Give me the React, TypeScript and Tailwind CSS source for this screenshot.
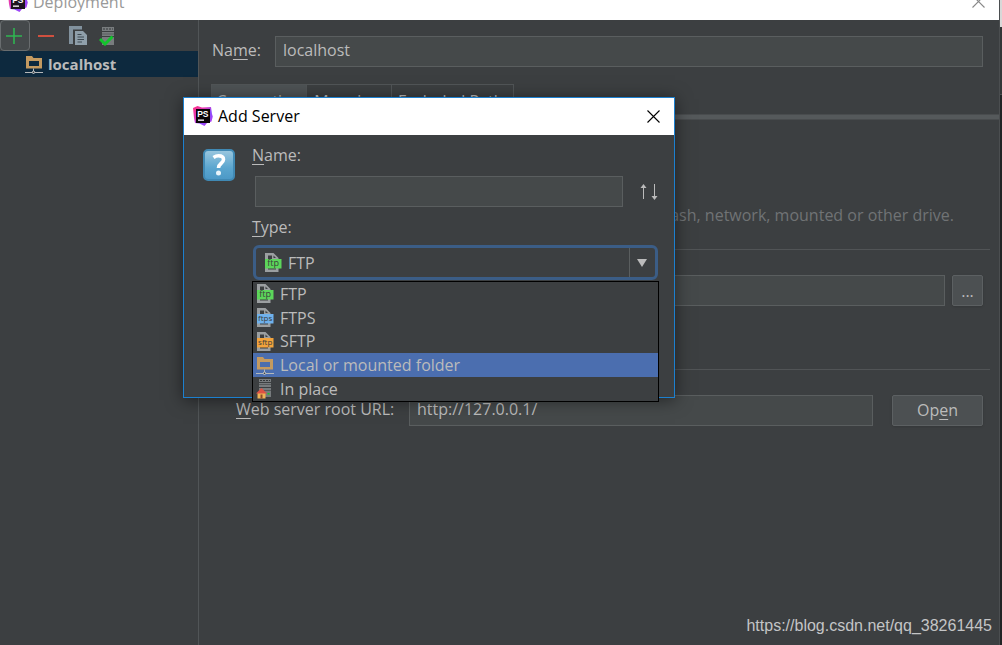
import type { ReactNode } from "react";

function PhpStormIcon({ id, faded = false }: { id: string; faded?: boolean }) {
  return (
    <svg width="20" height="20" viewBox="0 0 20 20" className="shrink-0" aria-hidden="true">
      <defs>
        <linearGradient id={id} x1="0" y1="0" x2="1" y2="1">
          <stop offset="0" stopColor="#ff2d80" />
          <stop offset="0.35" stopColor="#e03cb8" />
          <stop offset="0.6" stopColor="#8a4bff" />
          <stop offset="1" stopColor="#c13ce8" />
        </linearGradient>
      </defs>
      <path d="M0 2 4.500 0l4.500 1.500 9-.5L19 8l.8 2.500-1.300 5-4.500 1.500-2.500 3-5-2.500-4.500-.5L1 12Z" fill={`url(#${id})`} />
      <rect x="3" y="3" width="14" height="14" fill={faded ? "#1c1420" : "#0a0508"} />
      <text x="4.200" y="10.500" fontSize="8.500" fontWeight="700" fill="#fff" fontFamily="'Liberation Sans', sans-serif">
        PS
      </text>
      <rect x="5" y="13.500" width="6" height="1.300" fill="#fff" />
    </svg>
  );
}

function FolderServerIcon() {
  return (
    <svg width="18" height="19" viewBox="0 0 18 19" className="shrink-0" aria-hidden="true">
      <path fillRule="evenodd" d="M1 1h6l1.500 2H17v10.500H1ZM4 6v5h10V6Z" fill="#c49a60" />
      <path d="M0 17.500h7M10 17.500H18M8.500 13.500v3" stroke="#b4b8ba" />
      <circle cx="8.500" cy="17.300" r="1.200" fill="#3c3f41" stroke="#c8cccd" />
    </svg>
  );
}

function FileIcon({ label, color }: { label: string; color: string }) {
  return (
    <svg width="18" height="19" viewBox="0 0 18 19" className="shrink-0" aria-hidden="true">
      <path d="M1 0h8.500l5 5v14H1ZM4 2.500v14h8V6.500H8v-4Z" fillRule="evenodd" fill="#9b9fa1" />
      <path d="M9.500 2.500V5H12Z" fill="#3c3f41" />
      <rect x="1" y="6" width="16.500" height="9.500" fill={color} />
      <text
        x="9.200"
        y="13"
        textAnchor="middle"
        fontSize={label.length > 3 ? "8" : "9"}
        fill="#3a403b"
        fontFamily="'Open Sans', sans-serif"
      >
        {label}
      </text>
    </svg>
  );
}

function InPlaceIcon() {
  return (
    <svg width="18" height="20" viewBox="0 0 18 20" className="shrink-0" aria-hidden="true">
      <path d="M3 0h12v3H3ZM3 4h12v4H3ZM3 9h12v9H3Z" fill="#777b7d" />
      <path d="M4 1.500h10" stroke="#35383a" strokeDasharray="2 1" />
      <path d="M3 5.500h12M3 11.500h12" stroke="#55595b" />
      <path d="M1.500 14h8v5.500h-8Z" fill="#f0b354" />
      <path d="M0 14.500 5.500 9 11 14.500Z" fill="#dd5145" />
      <path d="M4.500 15.500h2v4h-2Z" fill="#8c4a2c" />
      <rect x="11.500" y="14" width="2" height="1.500" fill="#16c52b" />
    </svg>
  );
}

function CopyIcon() {
  return (
    <svg width="20" height="20" viewBox="0 0 20 20" aria-hidden="true">
      <path d="M1 0h13v3.500H5V18H1Z" fill="#82929e" />
      <path d="M7 5h8l4 4v10H7Z" fill="#8f9faa" />
      <path d="M9.500 8.500h4M9.500 11h6.500M9.500 13.500h6.500M9.500 16h4.500" stroke="#3f4a52" />
    </svg>
  );
}

function ValidateIcon() {
  return (
    <svg width="18" height="20" viewBox="0 0 18 20" aria-hidden="true">
      <path d="M3 1h12v4H3ZM3 6h12v4H3ZM3 11h12v8H3Z" fill="#787c7e" />
      <path d="M4 3h10" stroke="#35383a" strokeDasharray="2 1" />
      <path d="M3 8h12" stroke="#5b5f61" />
      <path d="M1 13l5 5 7.500-7.500" fill="none" stroke="#12c42c" strokeWidth="3" />
    </svg>
  );
}

function CloseIcon({ color }: { color: string }) {
  return (
    <svg width="13" height="13" viewBox="0 0 13 13" aria-hidden="true">
      <path d="M.5.5l12 12M12.500.5l-12 12" stroke={color} strokeWidth="1.100" fill="none" />
    </svg>
  );
}

const key = "underline decoration-1 underline-offset-3";
const field = "h-[31px] min-w-0 border border-[#5a5e5f] bg-[#45494a] px-[7px] pb-[3px] text-[#bbbbbb] outline-none";
const tool = "flex h-[31px] items-center justify-center";

const serverTypes: { name: string; icon: ReactNode; active?: boolean }[] = [
  { name: "FTP", icon: <FileIcon label="ftp" color="#5cd65a" /> },
  { name: "FTPS", icon: <FileIcon label="ftps" color="#6fb1ec" /> },
  { name: "SFTP", icon: <FileIcon label="sftp" color="#f2a33c" /> },
  { name: "Local or mounted folder", icon: <FolderServerIcon />, active: true },
  { name: "In place", icon: <InPlaceIcon /> },
];

function Sidebar() {
  return (
    <aside className="w-[199px] shrink-0 border-r border-[#515557]">
      <div className="flex h-[31px] items-center">
        <button type="button" aria-label="Add" className={`${tool} w-[30px] rounded-sm border border-[#696d6f] bg-[#45494b] pr-[2px]`}>
          <svg width="16" height="16" viewBox="0 0 16 16" aria-hidden="true">
            <path d="M8 0v16M0 8h16" stroke="#2fb552" strokeWidth="1.600" />
          </svg>
        </button>
        <button type="button" aria-label="Remove" className={`${tool} w-8`}>
          <svg width="16" height="16" viewBox="0 0 16 16" aria-hidden="true">
            <path d="M0 8h16" stroke="#d0503f" strokeWidth="2" />
          </svg>
        </button>
        <button type="button" aria-label="Copy" className={`${tool} w-8`}>
          <CopyIcon />
        </button>
        <button type="button" aria-label="Validate" className={`${tool} w-[27px]`}>
          <ValidateIcon />
        </button>
      </div>
      <div className="flex h-[26px] items-center gap-[5px] bg-[#0d293e] pl-[25px] font-bold">
        <FolderServerIcon />
        <span className="text-[15px]">localhost</span>
      </div>
    </aside>
  );
}

function ServerSettings() {
  return (
    <main className="min-w-0 flex-1 pt-4">
      <div className="flex items-center pr-4 pl-[13px]">
        <label htmlFor="server-name" className="w-[63px] pb-[3px]">
          Na<span className={key}>m</span>e:
        </label>
        <input id="server-name" defaultValue="localhost" className={`${field} flex-1`} />
      </div>

      <div role="tablist" className="mt-[17px] flex h-[30px] pl-3 leading-8">
        <button type="button" role="tab" aria-selected="true" className="w-24 border border-b-0 border-[#515557] bg-[#4e5355] text-center">
          Connection
        </button>
        <button type="button" role="tab" aria-selected="false" className="w-[85px] border-t border-r border-[#515557] pr-1 text-center">
          Mapping
        </button>
        <button type="button" role="tab" aria-selected="false" className="w-[122px] border-t border-r border-[#515557] pl-1 text-center">
          Excluded Paths
        </button>
      </div>
      <div className="ml-3 h-[6px] border-y border-[#494c4e] bg-[#55595b]" />

      <p className="mt-[83px] pr-[45px] text-right leading-6 text-[#707375]">flash, network, mounted or other drive.</p>
      <hr className="mt-[22px] mr-[9px] ml-6 border-[#515456]" />

      <div className="mt-[25px] flex gap-[7px] pr-4 pl-[210px]">
        <input aria-label="Folder" className={`${field} flex-1`} />
        <button type="button" aria-label="Browse" className="h-[31px] w-[31px] rounded-xs border border-[#5c6062] bg-[#4c5052] shadow-sm">
          ...
        </button>
      </div>

      <hr className="mt-[63px] mr-[9px] ml-6 border-[#515456]" />
      <div className="mt-[25px] flex pr-4 pl-[37px]">
        <label htmlFor="root-url" className="w-[173px] pt-[2px] whitespace-nowrap">
          <span className={key}>W</span>eb server root URL:
        </label>
        <input id="root-url" defaultValue="http://127.0.0.1/" className={`${field} flex-1`} />
        <button type="button" className="ml-[19px] h-[31px] w-[91px] rounded-xs border border-[#5c6062] bg-[#4c5052] pb-px shadow-sm">
          Op<span className={key}>e</span>n
        </button>
      </div>
    </main>
  );
}

function AddServerDialog() {
  return (
    <section role="dialog" aria-labelledby="dialog-title" className="absolute top-[97px] left-[183px] w-[492px] border border-[#1c80cf] bg-[#3c3f41] shadow-[0_2px_16px_rgba(0,0,0,0.5)]">
      <header className="flex h-[37px] items-center bg-white pr-[14px] pb-px pl-[9px] text-black">
        <PhpStormIcon id="ps-dialog" />
        <h1 id="dialog-title" className="ml-[5px] flex-1">Add Server</h1>
        <button type="button" aria-label="Close">
          <CloseIcon color="#000" />
        </button>
      </header>

      <div className="flex gap-[17px] pt-2 pr-4 pb-[117px] pl-[19px]">
        <svg width="32" height="32" viewBox="0 0 32 32" className="mt-[6px] shrink-0" aria-hidden="true">
          <defs>
            <linearGradient id="question" x1="0" y1="0" x2="0" y2="1">
              <stop offset="0" stopColor="#9cc8df" />
              <stop offset="0.6" stopColor="#5ba6cf" />
              <stop offset="1" stopColor="#4b98c6" />
            </linearGradient>
          </defs>
          <rect x="1" y="1" width="30" height="30" rx="4" fill="url(#question)" stroke="#4089b4" strokeWidth="2" />
          <path d="M10.500 8.500q2.500-1.700 5-1.700 5 0 5 3.700 0 2-2.500 4-2.500 2-2.500 4.500" fill="none" stroke="#fff" strokeWidth="3.600" />
          <circle cx="15.500" cy="24" r="2.500" fill="#e9f4fa" />
        </svg>
        <div className="flex min-w-0 flex-1 flex-col">
          <label htmlFor="new-name" className="h-6 leading-6">
            <span className={key}>N</span>ame:
          </label>
          <div className="mt-[9px] flex items-center pl-[3px]">
            <input id="new-name" className={`${field} flex-1`} />
            <button type="button" aria-label="Swap order" className="ml-[17px] w-[18px]">
              <svg width="18" height="16" viewBox="0 0 18 16" aria-hidden="true">
                <path d="M3.500 15V2M14.500 0v13" stroke="#bbb" />
                <path d="M.5 4 3.500 0l3 4ZM11.500 12l3 4 3-4Z" fill="#bbb" />
              </svg>
            </button>
          </div>
          <label htmlFor="server-type" className="mt-2 h-6 leading-6">
            <span className={key}>T</span>ype:
          </label>
          <div className="relative mt-[6px] ml-px">
            <select id="server-type" defaultValue="FTP" className="h-[35px] w-full appearance-none rounded-md border-3 border-[#3b5d86] bg-[#3c3f41] pl-8 outline-none">
              {serverTypes.map((type) => (
                <option key={type.name}>{type.name}</option>
              ))}
            </select>
            <span className="pointer-events-none absolute inset-y-[3px] left-[11px] flex items-center">
              <FileIcon label="ftp" color="#5cd65a" />
            </span>
            <span className="pointer-events-none absolute inset-y-[3px] right-[3px] flex w-[26px] items-center justify-center border-l border-[#5a5e5f] pr-[2px]">
              <svg width="10" height="8" viewBox="0 0 10 8" aria-hidden="true">
                <path d="M0 0h10L5 8Z" fill="#bbb" />
              </svg>
            </span>
            <ul role="listbox" aria-label="Server types" className="absolute top-9 -right-px -left-px flex h-[121px] flex-col border border-black bg-[#3c3f41]">
              {serverTypes.map((type) => (
                <li
                  key={type.name}
                  role="option"
                  aria-selected={Boolean(type.active)}
                  className={`flex flex-1 items-center gap-[6px] pl-[3px] leading-5 ${type.active ? "bg-[#4b6eaf]" : ""}`}
                >
                  {type.icon}
                  {type.name}
                </li>
              ))}
            </ul>
          </div>
        </div>
      </div>
    </section>
  );
}

export default function App() {
  return (
    <div className="relative flex min-h-screen overflow-hidden bg-[#3c3f41] font-['Open_Sans','Noto_Sans',sans-serif] text-base text-[#bbbbbb]">
      <div className="flex min-w-0 flex-1 flex-col">
        <header className="flex h-5 items-end overflow-hidden bg-white text-[#999999]">
          <div className="flex h-9 flex-1 shrink-0 items-center pr-[14px] pb-px pl-2">
            <PhpStormIcon id="ps-window" faded />
            <span className="ml-[5px] flex-1">Deployment</span>
            <button type="button" aria-label="Close window">
              <CloseIcon color="#888" />
            </button>
          </div>
        </header>
        <div className="flex flex-1">
          <Sidebar />
          <ServerSettings />
        </div>
      </div>
      <div className="flex w-[3px] flex-col border-l border-[#4b4e50] bg-[#222425]">
        <div className="h-[27px] bg-[#d8d8d8]" />
        <div className="h-[68px] border-b border-[#4b4e50] bg-[#333637]" />
      </div>
      <AddServerDialog />
      <p className="absolute right-[10px] bottom-[7px] font-['Liberation_Sans',sans-serif] leading-6 text-[#c4c5c6]">
        https://blog.csdn.net/qq_38261445
      </p>
    </div>
  );
}
